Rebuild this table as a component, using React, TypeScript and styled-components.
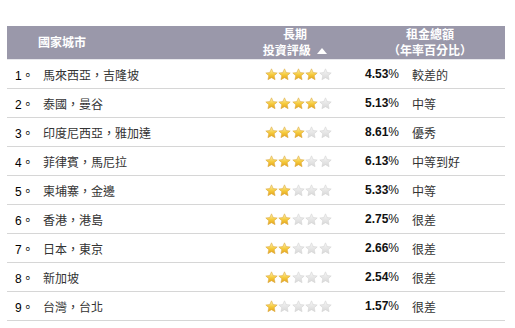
import styled, { createGlobalStyle } from 'styled-components'

const GlobalStyle = createGlobalStyle`
	html, body {
		margin: 0;
		padding: 0;
		background: #ffffff;
	}
	body {
		font-family: 'Liberation Sans', 'Noto Sans CJK TC', Arial, sans-serif;
		color: #222;
	}
`

type City = {
	name: string
	stars: number
	rate: string
	level: string
}

const cities: City[] = [
	{ name: '馬來西亞，吉隆坡', stars: 4, rate: '4.53', level: '較差的' },
	{ name: '泰國，曼谷', stars: 4, rate: '5.13', level: '中等' },
	{ name: '印度尼西亞，雅加達', stars: 3, rate: '8.61', level: '優秀' },
	{ name: '菲律賓，馬尼拉', stars: 3, rate: '6.13', level: '中等到好' },
	{ name: '柬埔寨，金邊', stars: 2, rate: '5.33', level: '中等' },
	{ name: '香港，港島', stars: 2, rate: '2.75', level: '很差' },
	{ name: '日本，東京', stars: 2, rate: '2.66', level: '很差' },
	{ name: '新加坡', stars: 2, rate: '2.54', level: '很差' },
	{ name: '台灣，台北', stars: 1, rate: '1.57', level: '很差' },
]

function Star({ on }: { on: boolean }) {
	return (
		<svg width="13" height="13" viewBox="0 0 24 24">
			<defs>
				<linearGradient id="gold" x1="0" y1="0" x2="0" y2="1">
					<stop offset="0" stopColor="#fff3b0" />
					<stop offset="0.55" stopColor="#f5c93a" />
					<stop offset="1" stopColor="#e2a21c" />
				</linearGradient>
				<linearGradient id="grey" x1="0" y1="0" x2="0" y2="1">
					<stop offset="0" stopColor="#f6f6f6" />
					<stop offset="1" stopColor="#d8d8d8" />
				</linearGradient>
			</defs>
			<path
				d="M12 1.5l3.2 6.9 7.3.8-5.5 5 1.6 7.3L12 17.8l-6.6 3.7 1.6-7.3-5.5-5 7.3-.8z"
				fill={on ? 'url(#gold)' : 'url(#grey)'}
				stroke={on ? '#d9a43a' : '#d0d0d0'}
				strokeWidth="1"
				strokeLinejoin="round"
			/>
		</svg>
	)
}

function App() {
	return (
		<>
			<GlobalStyle />
			<S.Wrapper>
				<S.Table>
					<S.Head>
						<S.HeadName>國家城市</S.HeadName>
						<S.HeadCell>
							長期
							<br />
							投資評級 <S.SortArrow />
						</S.HeadCell>
						<S.HeadCell $padLeft={20}>
							租金總額
							<br />
							（年率百分比）
						</S.HeadCell>
					</S.Head>
					{cities.map((c, i) => (
						<S.Row key={c.name}>
							<S.Num>{i + 1}。</S.Num>
							<S.Name>{c.name}</S.Name>
							<S.Stars>
								{[0, 1, 2, 3, 4].map((n) => (
									<Star key={n} on={n < c.stars} />
								))}
							</S.Stars>
							<S.Rate>
								<b>{c.rate}</b>%
							</S.Rate>
							<S.Level>{c.level}</S.Level>
						</S.Row>
					))}
				</S.Table>
			</S.Wrapper>
		</>
	)
}
export default App

const Wrapper = styled.div`
	width: 515px;
	height: 328px;
	padding: 26px 0 0 7px;
	box-sizing: border-box;
	overflow: hidden;
`

const Table = styled.div`
	width: 498px;
`

const Head = styled.div`
	display: grid;
	grid-template-columns: 248px 80px 1fr;
	align-items: center;
	height: 33px;
	background: #9a98aa;
	color: #ffffff;
	font-size: 12px;
	font-weight: bold;
	line-height: 16px;
	border-bottom: 1px solid #e8e8ec;
`

const HeadName = styled.div`
	padding-left: 31px;
`

const HeadCell = styled.div<{ $padLeft?: number }>`
	text-align: center;
	padding-left: ${({ $padLeft }) => $padLeft ?? 0}px;
	white-space: nowrap;
`

const SortArrow = styled.span`
	display: inline-block;
	width: 0;
	height: 0;
	margin-left: 3px;
	border-left: 5px solid transparent;
	border-right: 5px solid transparent;
	border-bottom: 6px solid #ffffff;
	vertical-align: 1px;
`

const Row = styled.div`
	display: grid;
	grid-template-columns: 36px 222px 100px 47px 1fr;
	align-items: center;
	height: 28px;
	border-bottom: 1px solid #d6d6d6;
	font-size: 12px;
`

const Num = styled.div`
	padding-left: 8px;
	color: #000;
`

const Name = styled.div`
	color: #333;
`

const Stars = styled.div`
	display: flex;
	gap: 0.4px;
	align-items: center;
`

const Rate = styled.div`
	color: #111;
	b {
		font-weight: bold;
	}
`

const Level = styled.div`
	color: #333;
`

const S = {
	Wrapper,
	Table,
	Head,
	HeadName,
	HeadCell,
	SortArrow,
	Row,
	Num,
	Name,
	Stars,
	Rate,
	Level,
}
